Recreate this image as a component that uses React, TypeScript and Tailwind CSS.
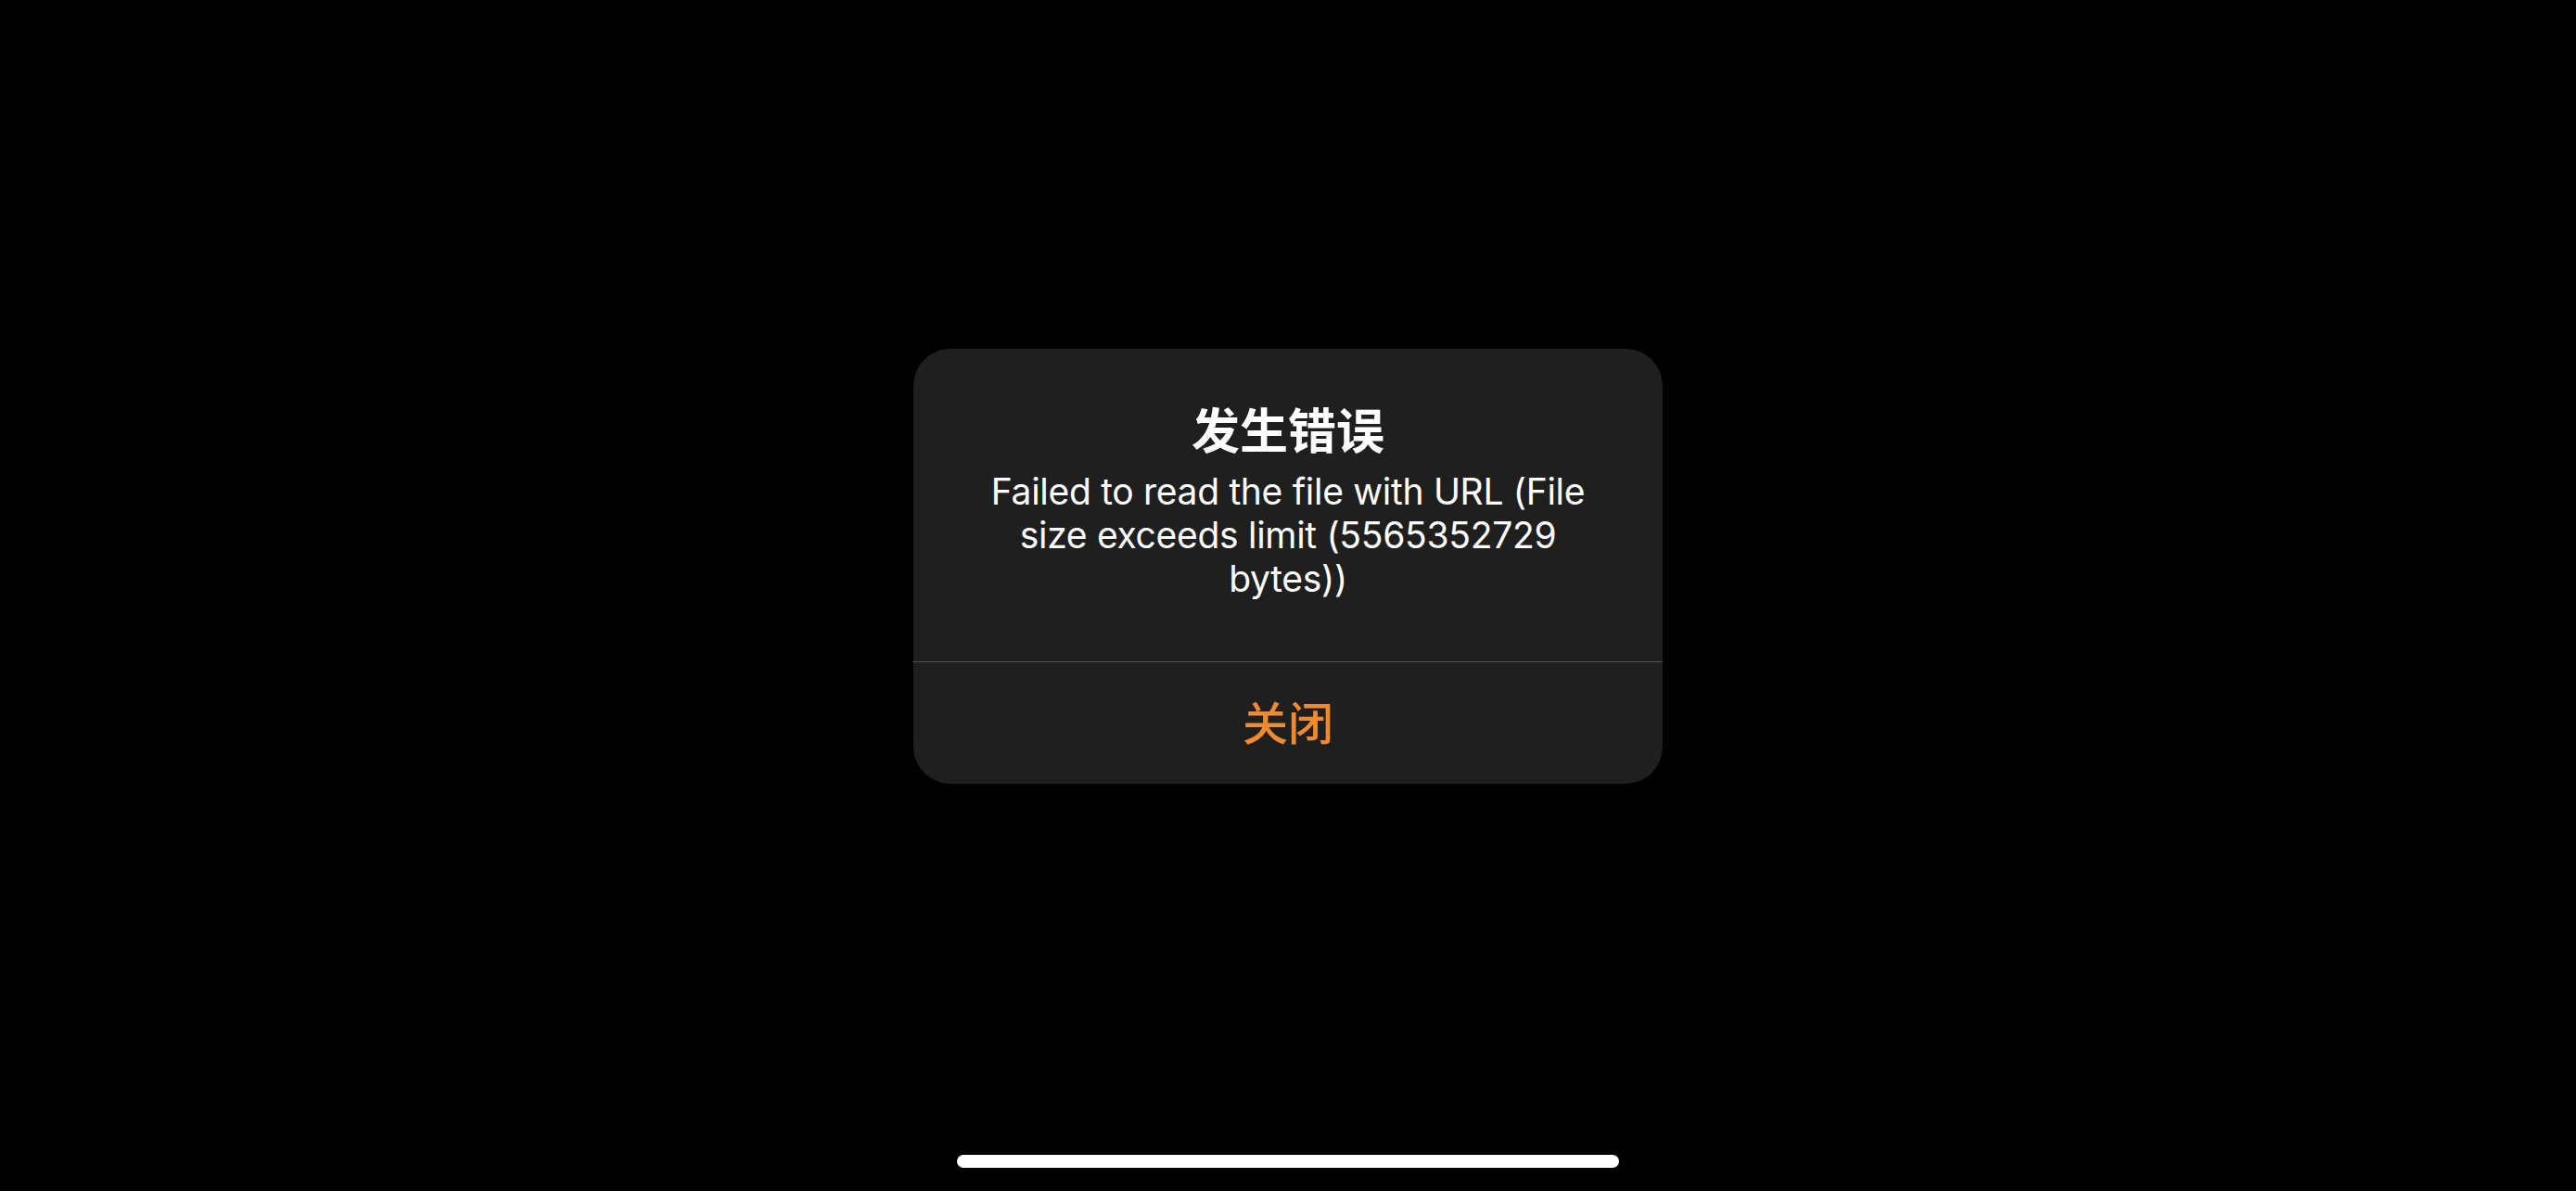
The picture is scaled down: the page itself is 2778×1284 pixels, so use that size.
export default function App() {
  return (
    <div className="relative flex h-[1284px] w-[2778px] items-start justify-center bg-black font-['Inter','Noto_Sans_CJK_SC',sans-serif]">
      <div className="mt-[376px] flex w-[808px] flex-col overflow-hidden rounded-[40px] bg-[#1f1f1f]">
        <div className="flex flex-col items-center px-[52px] pt-[56px] pb-[66px] text-center text-white">
          <h1 className="font-['Noto_Sans_CJK_SC',sans-serif] text-[52px] leading-[60px] font-semibold">
            发生错误
          </h1>
          <p className="mt-[14px] text-[39px] leading-[47px] tracking-[-0.3px]">
            Failed to read the file with URL (File size exceeds limit (5565352729 bytes))
          </p>
        </div>
        <div className="h-px bg-[#545456]" />
        <button
          type="button"
          className="flex h-[131px] items-center justify-center pb-[6px] font-['Noto_Sans_CJK_SC',sans-serif] text-[49px] font-medium text-[#ef8a2e]"
        >
          关闭
        </button>
      </div>
      <div className="absolute bottom-[25px] left-[1032px] h-[14px] w-[714px] rounded-full bg-white" />
    </div>
  );
}
